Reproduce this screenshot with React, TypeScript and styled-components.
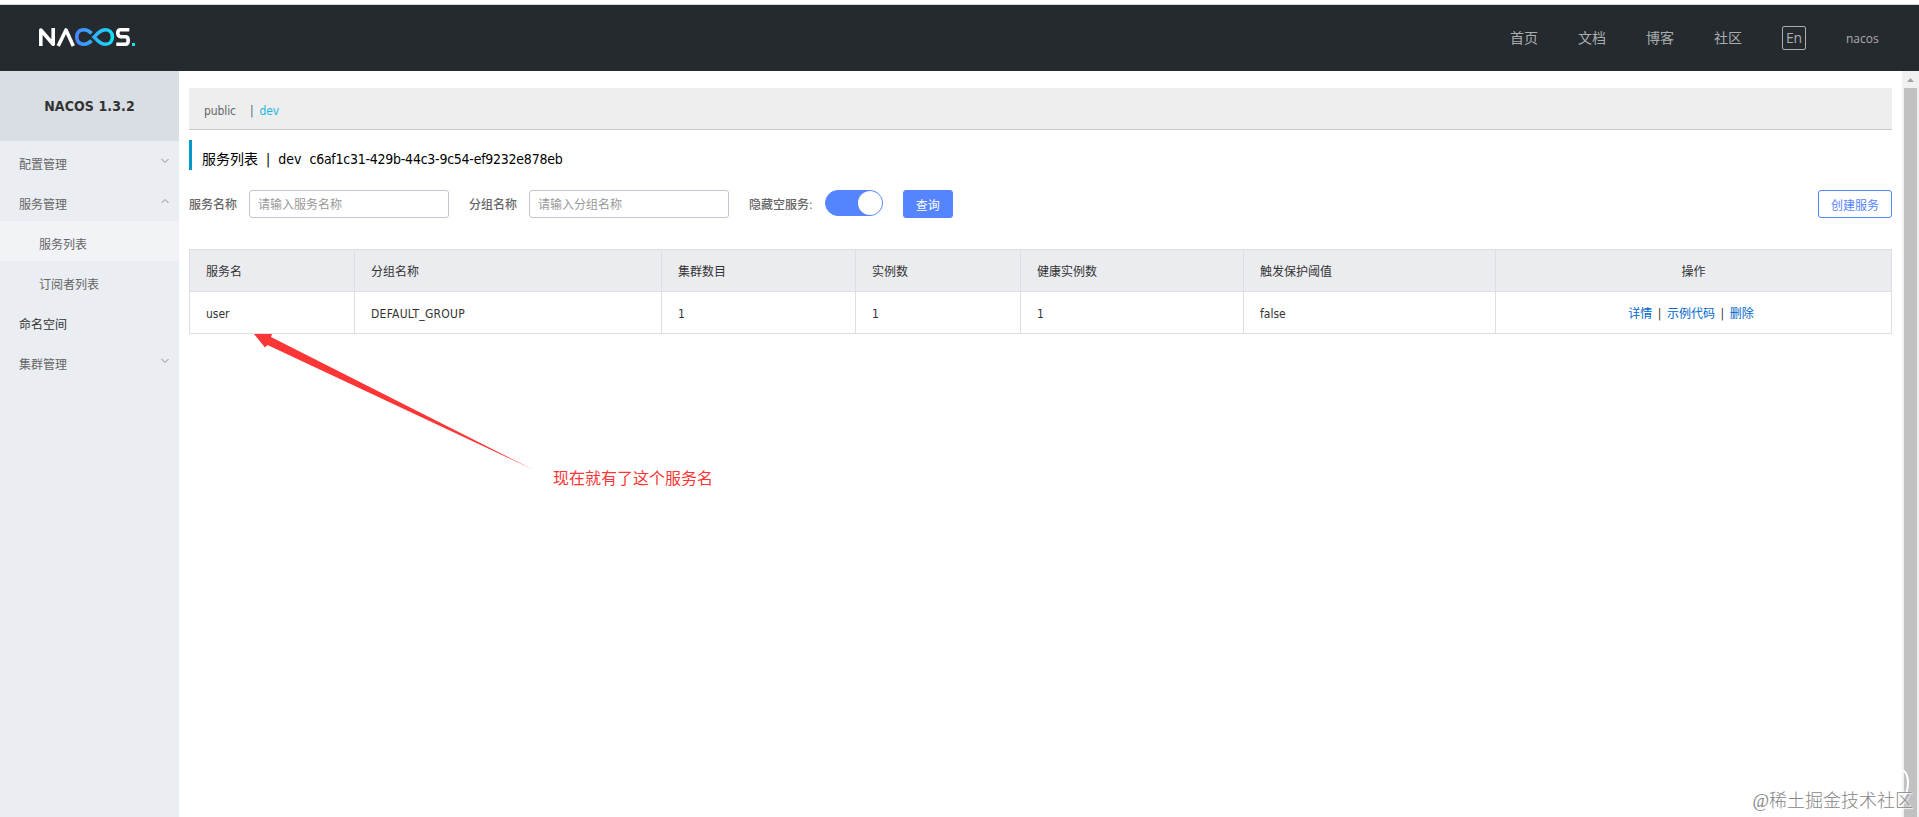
import React from "react";
import styled, { createGlobalStyle } from "styled-components";

const ui = `"DejaVu Sans Condensed", "DejaVu Sans", "Noto Sans CJK SC", sans-serif`;
const nav = `"Open Sans", "Noto Sans CJK SC", sans-serif`;

const GlobalStyle = createGlobalStyle`
  * { box-sizing: border-box; }
  body { margin: 0; background: #fff; font-family: ${ui}; font-size: 12px; color: #333; overflow: hidden; }
  a { color: inherit; text-decoration: none; }
`;

const Page = styled.div`
  position: relative;
  display: flex;
  flex-direction: column;
  height: 817px;
  padding-top: 4px;
  overflow: hidden;
`;

const Header = styled.header`
  display: flex;
  flex: none;
  justify-content: space-between;
  height: 67px;
  padding-left: 38px;
  border-top: 1px solid #d6d7d8;
  background: #252a2f;
`;

const Logo = styled.svg`
  display: block;
  margin-top: 22px;
`;

const Nav = styled.nav`
  display: flex;
  align-items: flex-start;
  gap: 40px;
  padding-right: 40px;
  color: #abaeb0;
  font-family: ${nav};
`;

const NavLink = styled.a`
  font-size: 14px;
  line-height: 20px;
  padding-top: 23px;
`;

const LangButton = styled.button`
  width: 24px;
  height: 24px;
  margin-top: 21px;
  padding: 0;
  border: 1px solid #abaeb0;
  border-radius: 2px;
  background: none;
  color: inherit;
  font: 14px/20px ${nav};
  letter-spacing: -0.2px;
`;

const UserName = styled.a`
  width: 33px;
  padding-top: 24px;
  font-size: 12px;
  line-height: 20px;
  white-space: nowrap;
`;

const Body = styled.div`
  display: flex;
  flex: 1;
  min-height: 0;
`;

const Sidebar = styled.aside`
  flex: none;
  width: 179px;
  background: #eaedf1;
`;

const Version = styled.h1`
  height: 70px;
  margin: 0;
  background: #d9dee4;
  font-size: 14px;
  font-weight: 700;
  letter-spacing: 0.1px;
  line-height: 70px;
  text-align: center;
  color: #333;
`;

const MenuItem = styled.a<{ $sub?: boolean; $active?: boolean; $dark?: boolean }>`
  display: flex;
  align-items: center;
  justify-content: space-between;
  height: 40px;
  padding: 4px 9px 0 ${(p) => (p.$sub ? 39 : 19)}px;
  background: ${(p) => (p.$active ? "#f2f3f7" : "transparent")};
  color: ${(p) => (p.$dark ? "#333" : "#666")};
`;

const Chevron = styled.svg<{ $up?: boolean }>`
  margin-top: -5px;
  transform: ${(p) => (p.$up ? "rotate(180deg)" : "none")};
`;

const Main = styled.main`
  flex: 1;
  min-width: 0;
  padding: 17px 10px 0;
`;

const NamespaceBar = styled.div`
  display: flex;
  height: 42px;
  padding: 0 15px;
  border-bottom: 1px solid #c8cacb;
  background: #eee;
  line-height: 47px;
  letter-spacing: -0.1px;
  color: #666;
`;

const Divider = styled.span`
  padding: 0 6px 0 14px;
  color: #546478;
`;

const CurrentNamespace = styled.span`
  color: #22b8dc;
`;

const PageTitle = styled.h2`
  display: flex;
  height: 30px;
  margin: 10px 0 20px;
  padding-left: 10px;
  border-left: 3px solid #09c;
  font-size: 14px;
  font-weight: 400;
  line-height: 38px;
  color: #000;
  white-space: pre;
`;

const NamespaceId = styled.span`
  letter-spacing: -0.25px;
`;

const Toolbar = styled.form`
  display: flex;
  align-items: flex-start;
  height: 59px;
`;

const Label = styled.label`
  margin-right: 12px;
  font-weight: 500;
  line-height: 31px;
  color: #666;
`;

const TextInput = styled.input`
  width: 200px;
  height: 28px;
  margin-right: 20px;
  padding: 2px 8px 0;
  border: 1px solid #c4c6cf;
  border-radius: 3px;
  font: 12px ${ui};
  &::placeholder { color: #999; opacity: 1; }
`;

const Switch = styled.span`
  display: flex;
  justify-content: flex-end;
  width: 58px;
  height: 26px;
  margin-right: 20px;
  border: 1px solid #5584ff;
  border-radius: 13px;
  background: #5584ff;
`;

const Knob = styled.span`
  width: 24px;
  height: 24px;
  border-radius: 50%;
  background: #fff;
`;

const Button = styled.button<{ $outline?: boolean }>`
  height: 28px;
  padding: 1px 12px 0;
  border: 1px solid #5584ff;
  border-radius: 3px;
  background: ${(p) => (p.$outline ? "#fff" : "#5584ff")};
  color: ${(p) => (p.$outline ? "#5584ff" : "#fff")};
  font: 12px ${ui};
  ${(p) => (p.$outline ? "margin-left: auto;" : "")}
`;

const Table = styled.div`
  display: grid;
  grid-template-columns: 165px 307px 194px 165px 223px 252px 396px;
  border: 1px solid #dcdee3;
  border-width: 1px 0 0 1px;
`;

const Cell = styled.div<{ $head?: boolean; $center?: boolean; $wide?: boolean }>`
  height: 42px;
  padding: 1px 16px 0;
  border: 1px solid #dcdee3;
  border-width: 0 1px 1px 0;
  background: ${(p) => (p.$head ? "#ebecf0" : "#fff")};
  line-height: 43px;
  letter-spacing: ${(p) => (p.$wide ? "0.25px" : "normal")};
  text-align: ${(p) => (p.$center ? "center" : "left")};
  color: #333;
`;

const Actions = styled.div`
  padding-right: 5px;
`;

const Action = styled.a`
  color: #06c;
`;

const ActionGap = styled.span`
  display: inline-block;
  width: 14.7px;
  text-align: center;
`;

const Scrollbar = styled.div`
  flex: none;
  display: flex;
  flex-direction: column;
  align-items: center;
  width: 17px;
  background: #f1f1f1;
`;

const ScrollArrow = styled.svg`
  flex: none;
  display: block;
`;

const Thumb = styled.div`
  flex: 1;
  width: 13px;
  background: #c1c1c1;
`;

const Arrow = styled.svg`
  position: absolute;
  left: 250px;
  top: 334px;
`;

const Note = styled.div`
  position: absolute;
  left: 553px;
  top: 467px;
  font-size: 16px;
  line-height: 24px;
  color: #fc3636;
`;

const Watermark = styled.div`
  position: absolute;
  right: 6px;
  bottom: 4px;
  font: 300 18px/24px "Liberation Serif", "Noto Sans CJK SC", serif;
  color: #858585;
  text-shadow: 0 0 2px #fff, 1px 1px 1px #fff;
  white-space: nowrap;
`;

const WatermarkArc = styled.svg`
  position: absolute;
  right: 9px;
  bottom: 18px;
`;

const menu = [
  { text: "配置管理", arrow: "down" },
  { text: "服务管理", arrow: "up" },
  { text: "服务列表", sub: true, active: true },
  { text: "订阅者列表", sub: true },
  { text: "命名空间", dark: true },
  { text: "集群管理", arrow: "down" },
];

const columns = ["服务名", "分组名称", "集群数目", "实例数", "健康实例数", "触发保护阈值"];
const service = ["user", "DEFAULT_GROUP", "1", "1", "1", "false"];

function NacosLogo() {
  return (
    <Logo width="99" height="22" viewBox="0 0 99 22" fill="none" aria-label="NACOS">
      <defs>
        <linearGradient id="loop" x1="37" y1="0" x2="76" y2="0" gradientUnits="userSpaceOnUse">
          <stop offset="0" stopColor="#4a84ff" />
          <stop offset="1" stopColor="#14e0f5" />
        </linearGradient>
      </defs>
      <g stroke="#fff" strokeWidth="3.6" strokeLinejoin="round">
        <path d="M2.8 19V3L15.2 17.2V1" />
        <path d="M20.2 19L28 3L35.3 19" />
        <path d="M91.3 2.8H82.6Q79.8 2.8 79.8 6T82.6 9.8H87.4Q90.2 9.8 90.2 13.4T87.4 17.2H78.3" />
      </g>
      <path
        d="M53.6 6.4C47.5 .6 38.8 2 38.8 10S47.5 19.4 53.6 13.6M56 10C60 5.8 62.8 2.7 67.5 2.7C72 2.7 74.4 6 74.4 10S72 17.3 67.5 17.3C62.8 17.3 60 14.2 56 10Z"
        stroke="url(#loop)"
        strokeWidth="3.6"
      />
      <rect x="94" y="16" width="3" height="3" fill="#14e0f5" />
    </Logo>
  );
}

export default function App() {
  return (
    <Page>
      <GlobalStyle />
      <Header>
        <NacosLogo />
        <Nav>
          {["首页", "文档", "博客", "社区"].map((t) => (
            <NavLink key={t}>{t}</NavLink>
          ))}
          <LangButton>En</LangButton>
          <UserName>nacos</UserName>
        </Nav>
      </Header>
      <Body>
        <Sidebar>
          <Version>NACOS 1.3.2</Version>
          {menu.map((m) => (
            <MenuItem key={m.text} $sub={m.sub} $active={m.active} $dark={m.dark}>
              {m.text}
              {m.arrow && (
                <Chevron $up={m.arrow === "up"} width="10" height="6" viewBox="0 0 10 6" fill="none">
                  <path d="M1.5 1L5 4.5L8.5 1" stroke="#8a8d91" />
                </Chevron>
              )}
            </MenuItem>
          ))}
        </Sidebar>
        <Main>
          <NamespaceBar>
            <span>public</span>
            <Divider>|</Divider>
            <CurrentNamespace>dev</CurrentNamespace>
          </NamespaceBar>
          <PageTitle>
            {"服务列表  |  dev  "}
            <NamespaceId>c6af1c31-429b-44c3-9c54-ef9232e878eb</NamespaceId>
          </PageTitle>
          <Toolbar>
            <Label>服务名称</Label>
            <TextInput placeholder="请输入服务名称" />
            <Label>分组名称</Label>
            <TextInput placeholder="请输入分组名称" />
            <Label>隐藏空服务:</Label>
            <Switch>
              <Knob />
            </Switch>
            <Button type="button">查询</Button>
            <Button type="button" $outline>创建服务</Button>
          </Toolbar>
          <Table>
            {columns.map((c) => (
              <Cell key={c} $head>{c}</Cell>
            ))}
            <Cell $head $center>操作</Cell>
            {service.map((v, i) => (
              <Cell key={i} $wide={i === 1}>{v}</Cell>
            ))}
            <Cell $center>
              <Actions>
                <Action>详情</Action>
                <ActionGap>|</ActionGap>
                <Action>示例代码</Action>
                <ActionGap>|</ActionGap>
                <Action>删除</Action>
              </Actions>
            </Cell>
          </Table>
        </Main>
        <Scrollbar>
          <ScrollArrow width="17" height="17" viewBox="0 0 17 17">
            <path d="M5 11L8.5 7L12 11Z" fill="#a3a3a3" />
          </ScrollArrow>
          <Thumb />
        </Scrollbar>
      </Body>
      <Arrow width="284" height="138" viewBox="250 334 284 138">
        <path d="M254 334H272L271 337L533 469.6L267.5 345L265 347.5Z" fill="#fc3636" />
      </Arrow>
      <Note>现在就有了这个服务名</Note>
      <WatermarkArc width="8" height="30" viewBox="0 0 8 30" fill="none">
        <path d="M1 1Q6 5 6 14T1 29" stroke="#fff" strokeWidth="2" />
      </WatermarkArc>
      <Watermark>@稀土掘金技术社区</Watermark>
    </Page>
  );
}
